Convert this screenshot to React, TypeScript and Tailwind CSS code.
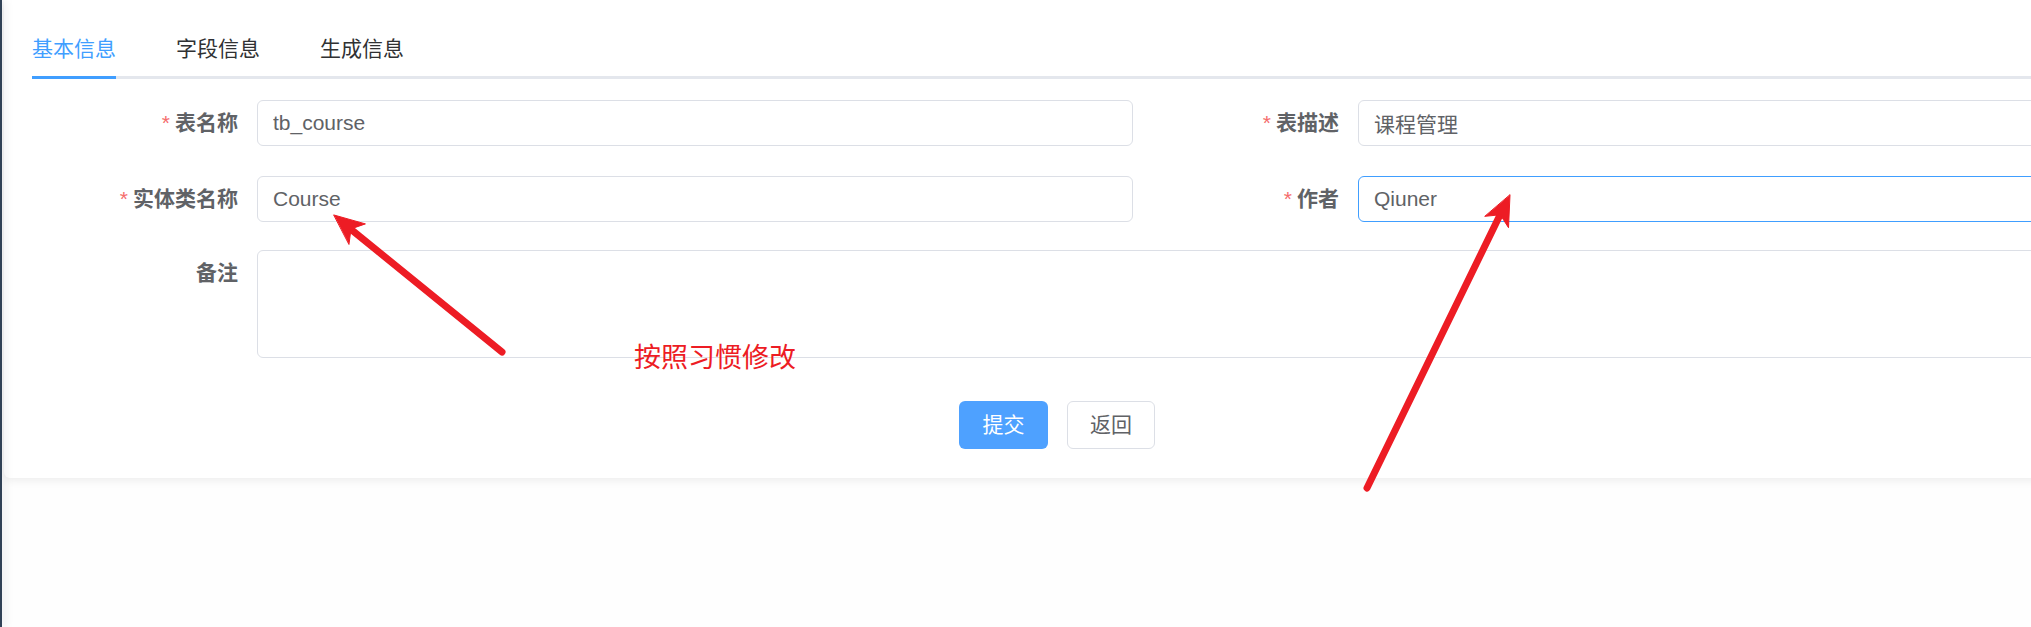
const tabs = ["基本信息", "字段信息", "生成信息"];

const Label = ({ text, required }: { text: string; required?: boolean }) => (
  <label className="w-[225px] shrink-0 pr-[19px] text-right leading-[46px] text-[21px] font-bold text-[#606266]">
    {required && <span className="mr-[5px] font-normal text-[#f56c6c]">*</span>}
    {text}
  </label>
);

const Field = ({
  label,
  value,
  focused,
}: {
  label: string;
  value: string;
  focused?: boolean;
}) => (
  <div className="flex w-[1101px] shrink-0">
    <Label text={label} required />
    <input
      readOnly
      value={value}
      className={
        "h-[46px] flex-1 rounded-[6px] border bg-white px-[15px] text-[21px] text-[#606266] outline-none " +
        (focused ? "border-[#409eff]" : "border-[#dcdfe6]")
      }
    />
  </div>
);

const Arrows = () => (
  <svg
    className="pointer-events-none absolute left-0 top-0"
    width="2031"
    height="627"
    viewBox="0 0 2031 627"
  >
    <g fill="#ed1c24" stroke="#ed1c24" strokeLinecap="round">
      <line x1="502" y1="352" x2="353" y2="231" strokeWidth="7" />
      <polygon points="334,215 365.4,223.9 351,228.9 349,244.1" strokeWidth="1" />
      <line x1="1367" y1="488" x2="1499" y2="217" strokeWidth="7" />
      <polygon points="1510,195 1508.5,227.7 1500.3,214.8 1485.1,216.3" strokeWidth="1" />
    </g>
  </svg>
);

export default function App() {
  return (
    <div className="relative h-[627px] w-[2031px] overflow-hidden bg-[#fefefe] font-['Liberation_Sans','Noto_Sans_CJK_SC',sans-serif]">
      <div className="flex h-full">
        <div className="relative z-10 w-[2px] shrink-0 bg-[#304156] shadow-[2px_0_8px_rgba(0,21,41,0.22)]" />
        <div className="ml-[2px] min-w-0 flex-1">
          <div className="w-[2300px] rounded-b-[6px] bg-white pb-[29px] pl-[28px] shadow-[0_2px_10px_rgba(0,0,0,0.08)]">
            {/* tabs */}
            <div className="pt-[21px]">
              <div className="flex border-b-[3px] border-[#e4e7ed]">
                {tabs.map((t, i) => (
                  <div
                    key={t}
                    className={
                      "relative h-[55px] leading-[55px] text-[21px] " +
                      (i === 0 ? "pr-[30px] text-[#409eff]" : "px-[30px] text-[#303133]")
                    }
                  >
                    {t}
                    {i === 0 && (
                      <span className="absolute bottom-[-3px] left-0 h-[3px] w-[84px] bg-[#409eff]" />
                    )}
                  </div>
                ))}
              </div>
            </div>

            {/* form */}
            <div className="mt-[21px]">
              <div className="flex">
                <Field label="表名称" value="tb_course" />
                <Field label="表描述" value="课程管理" />
              </div>
              <div className="mt-[30px] flex">
                <Field label="实体类名称" value="Course" />
                <Field label="作者" value="Qiuner" focused />
              </div>
              <div className="mt-[28px] flex w-[2202px]">
                <Label text="备注" />
                <textarea
                  readOnly
                  className="h-[108px] flex-1 resize-none rounded-[6px] border border-[#dcdfe6] bg-white px-[15px] py-[8px] text-[21px] text-[#606266] outline-none"
                />
              </div>
              <div className="ml-[927px] mt-[43px] flex gap-[19px]">
                <button className="h-[48px] w-[89px] rounded-[6px] bg-[#4ea1ff] text-[21px] text-white">
                  提交
                </button>
                <button className="h-[48px] w-[88px] rounded-[6px] border border-[#dcdfe6] bg-white text-[21px] text-[#606266]">
                  返回
                </button>
              </div>
            </div>
          </div>
        </div>
      </div>

      <Arrows />
      <div className="absolute left-[634px] top-[340px] text-[27px] leading-[32px] text-[#ed1c24] font-['Noto_Sans_CJK_SC',sans-serif]">
        按照习惯修改
      </div>
    </div>
  );
}
